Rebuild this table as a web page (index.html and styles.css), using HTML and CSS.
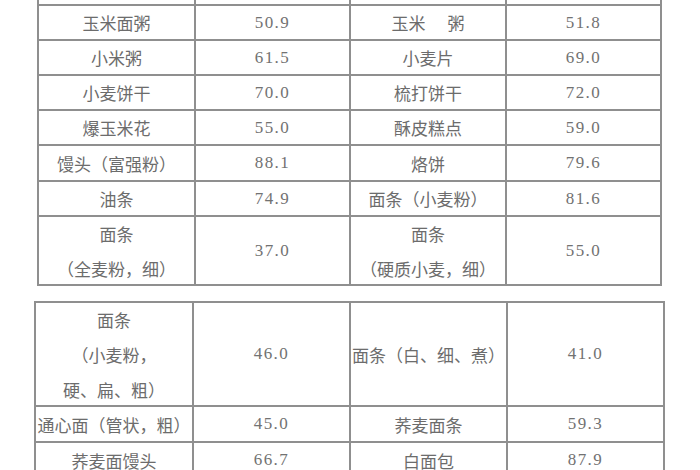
FILE: index.html
```html
<!DOCTYPE html>
<html lang="zh-CN">
<head>
<meta charset="utf-8">
<title>食物血糖生成指数</title>
<link rel="stylesheet" href="styles.css">
</head>
<body>
<div class="page">
  <div class="gi-table first">
    <div class="cell stub"></div><div class="cell stub"></div><div class="cell stub"></div><div class="cell stub"></div>

    <div class="cell name">玉米面粥</div><div class="cell num">50.9</div>
    <div class="cell name"><span class="line">玉米<span class="gap"></span>粥</span></div><div class="cell num">51.8</div>

    <div class="cell name">小米粥</div><div class="cell num">61.5</div>
    <div class="cell name">小麦片</div><div class="cell num">69.0</div>

    <div class="cell name">小麦饼干</div><div class="cell num">70.0</div>
    <div class="cell name">梳打饼干</div><div class="cell num">72.0</div>

    <div class="cell name">爆玉米花</div><div class="cell num">55.0</div>
    <div class="cell name">酥皮糕点</div><div class="cell num">59.0</div>

    <div class="cell name">馒头（富强粉）</div><div class="cell num">88.1</div>
    <div class="cell name">烙饼</div><div class="cell num">79.6</div>

    <div class="cell name">油条</div><div class="cell num">74.9</div>
    <div class="cell name">面条（小麦粉）</div><div class="cell num">81.6</div>

    <div class="cell name multi"><span>面条</span><span>（全麦粉，细）</span></div><div class="cell num">37.0</div>
    <div class="cell name multi"><span>面条</span><span>（硬质小麦，细）</span></div><div class="cell num">55.0</div>
  </div>

  <div class="gi-table second">
    <div class="cell name multi"><span>面条</span><span>（小麦粉，</span><span>硬、扁、粗）</span></div><div class="cell num">46.0</div>
    <div class="cell name">面条（白、细、煮）</div><div class="cell num">41.0</div>

    <div class="cell name">通心面（管状，粗）</div><div class="cell num">45.0</div>
    <div class="cell name">荞麦面条</div><div class="cell num">59.3</div>

    <div class="cell name">荞麦面馒头</div><div class="cell num">66.7</div>
    <div class="cell name">白面包</div><div class="cell num">87.9</div>
  </div>
</div>
</body>
</html>
```

FILE: styles.css
```css
html, body {
  margin: 0;
  padding: 0;
  background: #ffffff;
  overflow: hidden;
}

.page {
  width: 700px;
  height: 470px;
  display: flex;
  flex-direction: column;
  gap: 15px;
}

.gi-table {
  display: grid;
  gap: 2px;
  background: #8f8f8f;
}

.gi-table.first {
  margin-left: 37px;
  width: 625px;
  padding: 0 2px 2px 2px;
  box-sizing: border-box;
  grid-template-columns: 155px 153px 154px 153px;
  grid-template-rows: 4px 33px 33px 33px 33px 34px 33px 67px;
}

.gi-table.second {
  margin-left: 34px;
  width: 631px;
  padding: 2px 2px 2px 2px;
  box-sizing: border-box;
  grid-template-columns: 156px 155px 155px 155px;
  grid-template-rows: 102px 34px 34px;
}

.cell {
  background: #ffffff;
  display: flex;
  flex-direction: column;
  align-items: center;
  justify-content: center;
  color: #6c6c6c;
  white-space: nowrap;
  overflow: hidden;
}

.name {
  font-family: "Noto Sans CJK SC", "Noto Sans", sans-serif;
  font-size: 17px;
  line-height: 35px;
}

.multi span {
  display: block;
  height: 35px;
  line-height: 35px;
}

.line {
  display: block;
}

.num {
  font-family: "Liberation Serif", "DejaVu Serif", serif;
  font-size: 17px;
  letter-spacing: 1.4px;
  color: #727272;
}

.gap {
  display: inline-block;
  width: 22px;
}
```
